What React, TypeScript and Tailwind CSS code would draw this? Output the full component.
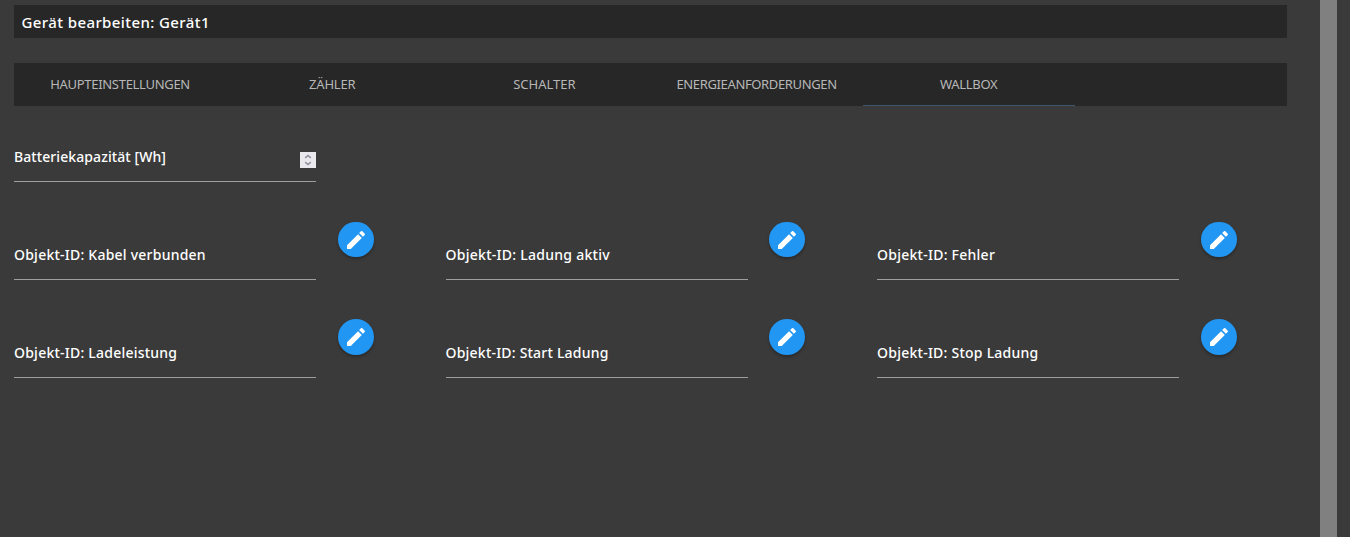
type ObjectField = { label: string; spacing: string };

const tabs = [
  { label: 'HAUPTEINSTELLUNGEN', spacing: 'tracking-[-0.3px]' },
  { label: 'ZÄHLER', spacing: 'tracking-[-0.15px]' },
  { label: 'SCHALTER', spacing: 'tracking-[0px]' },
  { label: 'ENERGIEANFORDERUNGEN', spacing: 'tracking-[-0.36px]' },
  { label: 'WALLBOX', spacing: 'tracking-[-0.3px]', active: true },
];

const rows: ObjectField[][] = [
  [
    { label: 'Objekt-ID: Kabel verbunden', spacing: 'tracking-[0.23px]' },
    { label: 'Objekt-ID: Ladung aktiv', spacing: 'tracking-[0.27px]' },
    { label: 'Objekt-ID: Fehler', spacing: 'tracking-[0.25px]' },
  ],
  [
    { label: 'Objekt-ID: Ladeleistung', spacing: 'tracking-[0.23px]' },
    { label: 'Objekt-ID: Start Ladung', spacing: 'tracking-[0.21px]' },
    { label: 'Objekt-ID: Stop Ladung', spacing: 'tracking-[0.24px]' },
  ],
];

function EditButton({ tall }: { tall: boolean }) {
  return (
    <button
      aria-label="Bearbeiten"
      className={`ml-[21.8px] flex w-9 shrink-0 items-center justify-center rounded-full bg-[#2196f3] shadow-[0_2px_3px_rgba(0,0,0,0.28)] ${tall ? 'h-9' : 'mt-px h-[35px]'}`}
    >
      <svg viewBox="0 0 24 24" className="size-6 fill-white">
        <path d="M3 17.25V21h3.75L17.81 9.94l-3.75-3.75L3 17.25zM20.71 7.04a.996.996 0 0 0 0-1.41l-2.34-2.34a.996.996 0 0 0-1.41 0l-1.83 1.83 3.75 3.75 1.83-1.83z" />
      </svg>
    </button>
  );
}

export default function App() {
  return (
    <div className="flex h-[537px] w-[1350px] overflow-hidden bg-[#3a3a3a] font-['Noto_Sans',sans-serif] text-white">
      <main className="w-[1320px] pl-[14px] pt-[5px]">
        <h1 className="flex h-[33px] w-[1273px] items-center bg-[#272727] pl-[7.5px] pt-0.5 text-[15px] font-medium tracking-[0.4px]">
          <span className="whitespace-nowrap">Gerät bearbeiten: Gerät1</span>
        </h1>
        <nav className="mt-[25px] grid h-[43px] w-[1273px] grid-cols-6 bg-[#272727] text-[13px] text-[#b7b7b7]">
          {tabs.map((tab) => (
            <a
              key={tab.label}
              className={`flex items-center justify-center whitespace-nowrap border-b pt-px ${tab.spacing} ${tab.active ? 'border-[#40566c]' : 'border-transparent'}`}
            >
              <span>{tab.label}</span>
            </a>
          ))}
        </nav>
        <div className="mt-[36px] flex h-10 w-[302px] justify-between border-b border-[#9e9e9e]">
          <label className="mt-[5px] text-[14px] font-medium leading-5 tracking-[0.08px]">Batteriekapazität [Wh]</label>
          <span className="mt-[10px] flex size-4 items-center justify-center bg-[#e9e9ed]">
            <svg viewBox="0 0 16 16" className="size-4 fill-none stroke-[#8f8f9d] stroke-[1.5]">
              <path d="M5.2 5.9 8 3.4l2.8 2.5M5.2 10.1 8 12.6l2.8-2.5" />
            </svg>
          </span>
        </div>
        <div className="mt-[39px]">
          {rows.map((row, index) => (
            <div key={row[0].label} className={`grid w-[1294.6px] grid-cols-3 ${index === 0 ? 'h-[98px]' : ''}`}>
              {row.map((field) => (
                <div key={field.label} className="flex h-[59px] items-start">
                  <div className="h-[59px] w-[302px] border-b border-[#9e9e9e] pt-[24px]">
                    <label className={`block whitespace-nowrap text-[14px] font-medium leading-5 ${field.spacing}`}>{field.label}</label>
                  </div>
                  <EditButton tall={index === 1} />
                </div>
              ))}
            </div>
          ))}
        </div>
      </main>
      <div className="w-[17px] bg-[#808080]" />
    </div>
  );
}
